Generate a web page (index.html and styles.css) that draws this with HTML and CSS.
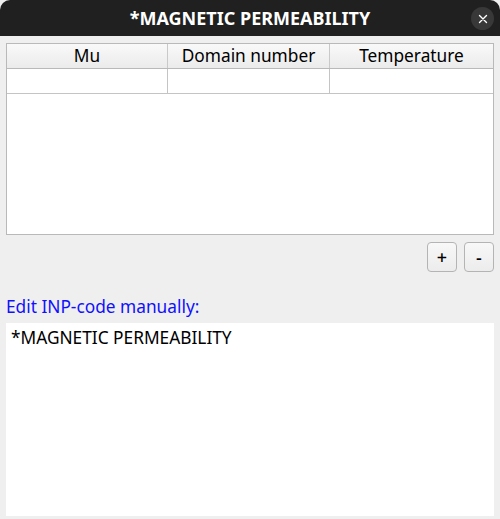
FILE: index.html
```html
<!DOCTYPE html>
<html>
<head>
<meta charset="utf-8">
<link rel="stylesheet" href="styles.css">
</head>
<body>
<div class="window">
  <div class="titlebar">
    <span class="title">*MAGNETIC PERMEABILITY</span>
    <span class="close">
      <svg width="10" height="10" viewBox="0 0 10 10"><path d="M1.5 1.5 L8.5 8.5 M8.5 1.5 L1.5 8.5" stroke="#ffffff" stroke-width="1.4" stroke-linecap="round"/></svg>
    </span>
  </div>
  <div class="content">
    <div class="table">
      <div class="row head">
        <div class="cell">Mu</div>
        <div class="cell">Domain number</div>
        <div class="cell">Temperature</div>
      </div>
      <div class="row">
        <div class="cell"></div>
        <div class="cell"></div>
        <div class="cell"></div>
      </div>
    </div>
    <div class="buttons">
      <button class="btn">+</button>
      <button class="btn">-</button>
    </div>
    <div class="label">Edit INP-code manually:</div>
    <div class="editor">*MAGNETIC PERMEABILITY</div>
  </div>
</div>
</body>
</html>
```

FILE: styles.css
```css
* { box-sizing: border-box; }
html, body { margin: 0; padding: 0; background: #efefef; }
body { font-family: "Noto Sans", "Open Sans", sans-serif; color: #000; }
.window { width: 500px; height: 519px; display: flex; flex-direction: column; background: #efefef; }
.titlebar {
  height: 36px; background: #202020; border-radius: 10px 10px 0 0;
  display: flex; align-items: center; justify-content: center; position: relative;
}
.title { color: #fff; font-weight: bold; font-size: 18px; letter-spacing: 0; }
.close {
  position: absolute; right: 6px; top: 7px; width: 23px; height: 23px; border-radius: 50%;
  background: #383838; display: flex; align-items: center; justify-content: center;
}
.close svg { display: block; }
.content { flex: 1; padding: 7px 6px 3px 6px; display: flex; flex-direction: column; }
.table {
  height: 192px; width: 488px; background: #fff; border: 1px solid #b9b9b9;
}
.row { display: grid; grid-template-columns: 161px 162px 1fr; height: 25px; border-bottom: 1px solid #c4c4c4; }
.row.head { background: linear-gradient(#f9f9f9, #ebebeb); height: 25px; border-bottom: 1px solid #b9b9b9; }
.cell { border-right: 1px solid #c4c4c4; display: flex; align-items: center; justify-content: center; font-size: 17.3px; line-height: 1; }
.row.head .cell { border-right-color: #c9c9c9; }
.cell:last-child { border-right: none; }
.buttons { display: flex; justify-content: flex-end; gap: 7px; margin-top: 7px; padding-right: 0; }
.btn {
  width: 30px; height: 30px; border: 1px solid #b4b4b4; border-radius: 4px;
  background: linear-gradient(#f8f8f8, #ececec); font-family: inherit; font-size: 18px; font-weight: 500;
  padding: 0; color: #000;
}
.label { color: #1010ff; font-size: 17.3px; margin-top: 25px; line-height: 20px; }
.editor {
  margin-top: 6px; flex: 1; background: #fff; padding: 5px 5px; font-size: 17.3px; line-height: 20px;
}
```
